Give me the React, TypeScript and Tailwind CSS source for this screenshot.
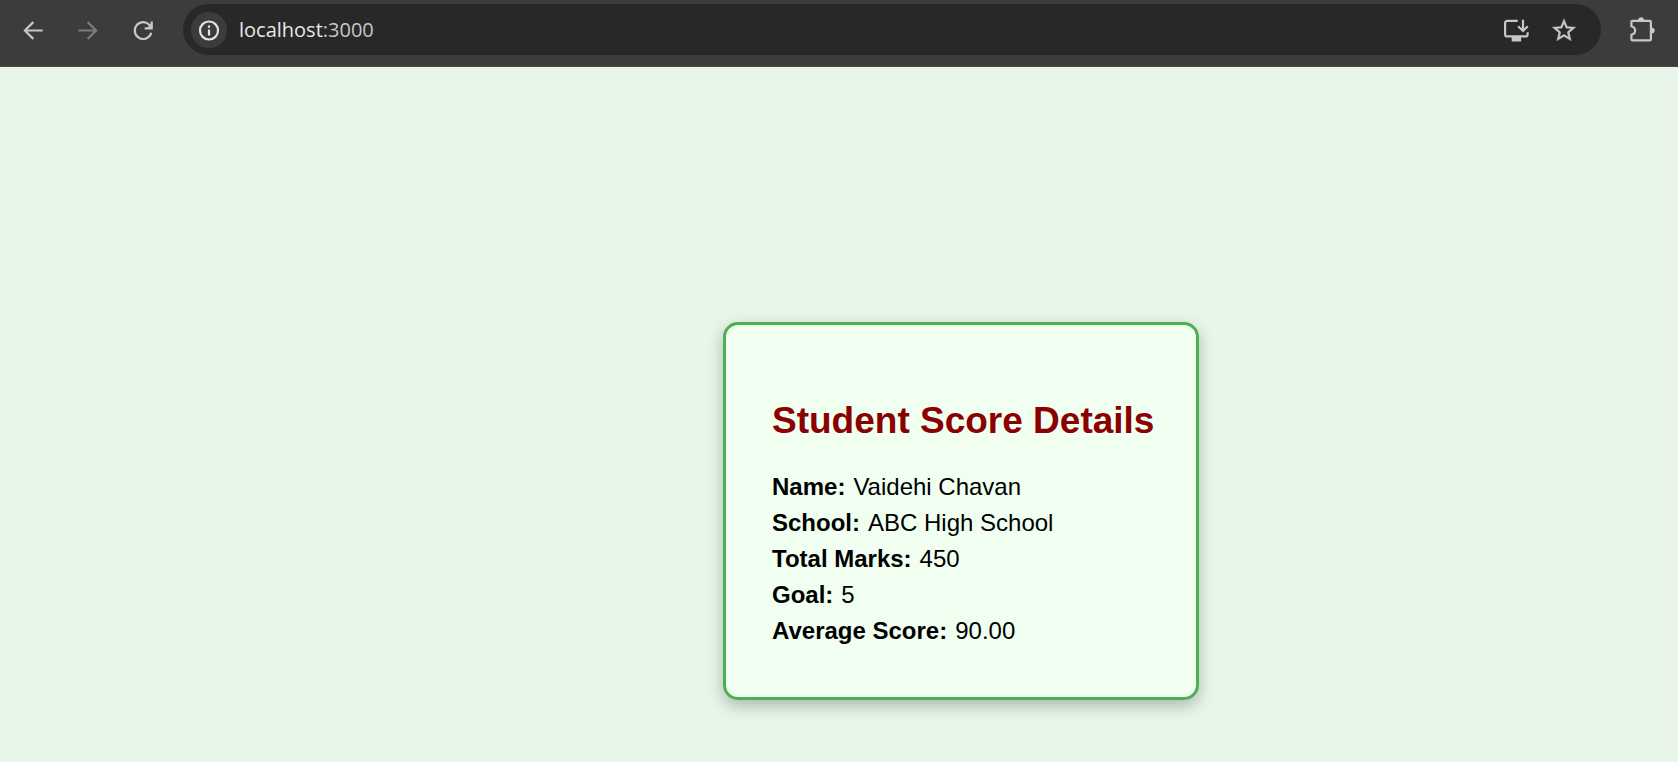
import type { ReactNode } from "react";

type IconButtonProps = { label: string; className: string; children: ReactNode };

function IconButton({ label, className, children }: IconButtonProps) {
  return (
    <button type="button" aria-label={label} className={`grid shrink-0 place-items-center rounded-full ${className}`}>
      {children}
    </button>
  );
}

const stroke = { fill: "none", stroke: "currentColor", strokeWidth: 2.2 };

function BackIcon() {
  return (
    <svg width="24" height="24" viewBox="0 0 24 24" {...stroke}>
      <path d="M21.6 12.5H4.5M12.3 4.1l-8.4 8.4 8.4 8.4" />
    </svg>
  );
}

function ForwardIcon() {
  return (
    <svg width="24" height="24" viewBox="0 0 24 24" {...stroke}>
      <path d="M2.4 12.5h17.1M11.7 4.1l8.4 8.4-8.4 8.4" />
    </svg>
  );
}

function ReloadIcon() {
  return (
    <svg width="24" height="24" viewBox="0 0 24 24" {...stroke}>
      <path d="M20.3 14.8A8.4 8.4 0 1 1 18.2 6.7L20 8.8" />
      <path d="M20.7 3.4v7h-7" />
      <path d="M21 10.6h-5.6L21 5z" fill="currentColor" stroke="none" />
    </svg>
  );
}

function InfoIcon() {
  return (
    <svg width="24" height="24" viewBox="0 0 24 24" {...stroke}>
      <circle cx="12" cy="12.5" r="9" />
      <path d="M12 11.5v6M12 7.5v2.2" />
    </svg>
  );
}

function InstallIcon() {
  return (
    <svg width="28" height="28" viewBox="0 0 28 28" {...stroke}>
      <path d="M16.7 4.9H6.1a2 2 0 0 0-2 2v11.5a2 2 0 0 0 2 2h18.5a2 2 0 0 0 2-2v-2.2" />
      <path d="M22 3.8v10.6M17.2 10.2L22 15l4.8-4.8" />
      <path d="M10.7 21h9.4v4.5h-9.4z" fill="currentColor" stroke="none" />
    </svg>
  );
}

function StarIcon() {
  return (
    <svg width="28" height="28" viewBox="0 0 24 24" fill="currentColor" stroke="currentColor" strokeWidth="0.3">
      <path d="M22 9.54l-7.19-.62L12 2.3 9.19 8.93 2 9.54l5.46 4.73L5.82 21.3 12 17.57l6.18 3.73-1.63-7.03L22 9.54zM12 15.7l-3.76 2.27 1-4.28-3.32-2.88 4.38-.38L12 6.4l1.71 4.04 4.38.38-3.32 2.88 1 4.28L12 15.7z" />
    </svg>
  );
}

function PuzzleIcon() {
  return (
    <svg width="28" height="28" viewBox="0 0 28 28" {...stroke}>
      <path d="M4.6 4.9h17.1a1.2 1.2 0 0 1 1.2 1.2v17.1a1.2 1.2 0 0 1-1.2 1.2H4.6a1.2 1.2 0 0 1-1.2-1.2v-4.3c2.4-.6 3.7-2.2 3.7-4.3s-1.3-3.7-3.7-4.3V6.1a1.2 1.2 0 0 1 1.2-1.2z" />
      <path d="M10 5a3.1 3.7 0 0 1 6.2 0zM23 11.4a3.7 3.1 0 0 1 0 6.2z" fill="currentColor" stroke="none" />
    </svg>
  );
}

function Toolbar() {
  return (
    <header className="flex h-[67px] items-start border-b border-[#484646] bg-[#3c3c3c] pt-1 text-[#c7c7c7]">
      <nav className="flex h-[51px] items-center gap-[15px] pl-[13px]">
        <IconButton label="Back" className="size-10"><BackIcon /></IconButton>
        <IconButton label="Forward" className="size-10 text-[#7c7c7c]"><ForwardIcon /></IconButton>
        <IconButton label="Reload" className="size-10"><ReloadIcon /></IconButton>
      </nav>
      <div className="ml-5 flex h-[51px] flex-1 items-center rounded-full bg-[#282828] pl-2 pr-[23px]">
        <IconButton label="Site information" className="size-9 bg-[#3c3c3c] text-[#e3e3e3]"><InfoIcon /></IconButton>
        <p className="flex-1 pl-3 font-['Open_Sans',sans-serif] text-[20px] text-[#c7c7c7]">
          <span className="text-[#e8e8e8]">localhost</span>:3000
        </p>
        <IconButton label="Install app" className="size-7"><InstallIcon /></IconButton>
        <IconButton label="Bookmark" className="ml-[21px] size-7"><StarIcon /></IconButton>
      </div>
      <div className="flex h-[51px] items-center pl-[25px] pr-5">
        <IconButton label="Extensions" className="size-8"><PuzzleIcon /></IconButton>
      </div>
    </header>
  );
}

const details = [
  { label: "Name", value: "Vaidehi Chavan" },
  { label: "School", value: "ABC High School" },
  { label: "Total Marks", value: "450" },
  { label: "Goal", value: "5" },
  { label: "Average Score", value: "90.00" },
];

export default function App() {
  return (
    <div className="flex min-h-screen flex-col bg-[#e8f5e9] font-['Liberation_Sans',Arial,sans-serif] text-black">
      <Toolbar />
      <main className="flex flex-1 items-start justify-center pb-12 pl-[244px] pt-[255px]">
        <section className="w-[476px] max-w-full rounded-[15px] border-3 border-[#4caf50] bg-[#f0fff0] pb-12 pl-[46px] pr-10 pt-[74px] shadow-[0_6px_16px_rgba(0,0,0,0.25)]">
          <h1 className="text-[37px] font-bold leading-[44px] text-[#8b0000]">Student Score Details</h1>
          <dl className="mt-[26px] text-[24px] leading-9">
            {details.map(({ label, value }) => (
              <div key={label} className="flex gap-2">
                <dt className="font-bold">{label}:</dt>
                <dd>{value}</dd>
              </div>
            ))}
          </dl>
        </section>
      </main>
    </div>
  );
}
